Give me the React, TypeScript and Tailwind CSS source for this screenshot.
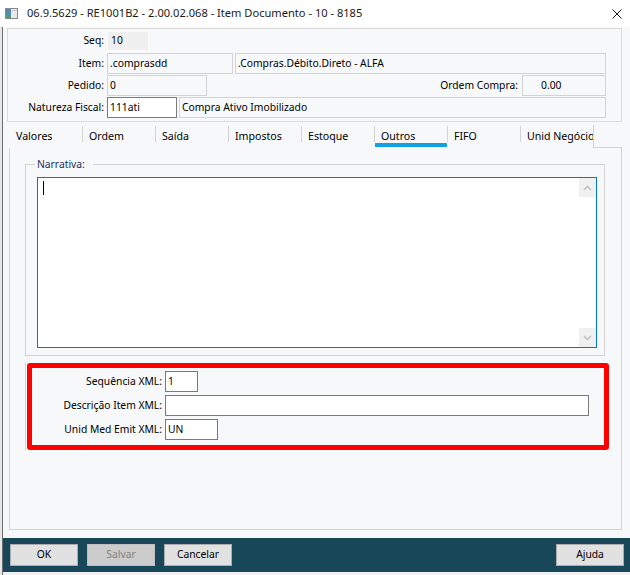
import React from "react";

const tabs = ["Valores", "Ordem", "Saída", "Impostos", "Estoque", "Outros", "FIFO", "Unid Negócio"];

function Box({ w, value, kind = "plain", pl = "pl-[2px]" }: { w: string; value?: string; kind?: "plain" | "edit" | "seq"; pl?: string }) {
  const styles = {
    plain: "border-[#d3d3d3] bg-[#f7f8fa]",
    edit: "border-[#7a7a7a] bg-white",
    seq: "border-[#fbfbfb] bg-[#f0f0f0]",
  };
  return (
    <div className={`${w} h-full border ${styles[kind]} ${pl} flex items-center whitespace-nowrap overflow-hidden`}>
      {value}
    </div>
  );
}

function WindowIcon() {
  return (
    <svg width="13" height="11" viewBox="0 0 13 11">
      <defs>
        <linearGradient id="wg" x1="0" y1="0" x2="0" y2="1">
          <stop offset="0" stopColor="#4f86c6" />
          <stop offset="1" stopColor="#4d9c7a" />
        </linearGradient>
      </defs>
      <rect x="0.5" y="0.5" width="12" height="10" fill="#e9e9e9" stroke="#8a8a8a" />
      <rect x="1" y="1" width="5" height="9" fill="url(#wg)" />
      <rect x="7" y="2" width="5" height="1" fill="#c8c8c8" />
    </svg>
  );
}

export default function App() {
  return (
    <div className="w-[630px] h-[575px] bg-[#e6e6e6] font-['Noto_Sans',sans-serif] text-[10.3px] text-black overflow-hidden flex flex-col">
      {/* TITLE BAR */}
      <div className="h-[27px] bg-white flex items-center pl-[5px] pr-[8px] shrink-0">
        <WindowIcon />
        <span className="ml-[9px] text-[11.1px] text-[#1a1a1a]">06.9.5629 - RE1001B2 - 2.00.02.068 - Item Documento - 10 - 8185</span>
        <div className="flex-1" />
        <svg width="10" height="10" viewBox="0 0 10 10">
          <path d="M0.5 0.5 L9.5 9.5 M9.5 0.5 L0.5 9.5" stroke="#1a1a1a" strokeWidth="1" />
        </svg>
      </div>

      {/* BODY */}
      <div className="flex-1 ml-[2px] border-l border-[#6e6e6e] bg-[#f7f8fa] flex flex-col">
        {/* HEADER PANEL */}
        <div className="ml-[4px] mt-[1px] w-[615px] h-[94px] border border-[#dadada] pt-[2px] pr-[15px] flex flex-col gap-[1px]">
          <div className="flex h-[20px] items-center">
            <div className="w-[96px] text-right">Seq:</div>
            <div className="ml-[3px] h-full flex"><Box w="w-[42px]" value="10" kind="seq" pl="pl-[3px]" /></div>
          </div>
          <div className="flex h-[21px] items-center mt-[1px]">
            <div className="w-[96px] text-right">Item:</div>
            <div className="ml-[3px] h-full flex gap-[2px]">
              <Box w="w-[126px]" value=".comprasdd" />
              <Box w="w-[371px]" value=".Compras.Débito.Direto - ALFA" />
            </div>
          </div>
          <div className="flex h-[21px] items-center">
            <div className="w-[96px] text-right">Pedido:</div>
            <div className="ml-[3px] h-full flex"><Box w="w-[100px]" value="0" /></div>
            <div className="flex-1 text-right">Ordem Compra:</div>
            <div className="ml-[4px] h-full flex"><Box w="w-[84px]" value="0.00" pl="pl-[18px]" /></div>
          </div>
          <div className="flex h-[21px] items-center">
            <div className="w-[96px] text-right">Natureza Fiscal:</div>
            <div className="ml-[3px] h-full flex gap-[2px]">
              <Box w="w-[70px]" value="111ati" kind="edit" />
              <Box w="w-[427px]" value="Compra Ativo Imobilizado" />
            </div>
          </div>
        </div>

        {/* TABS */}
        <div className="ml-[6px] mt-[3px] w-[613px] h-[23px] flex pl-[1px]">
          {tabs.map((t, i) => (
            <div
              key={t}
              className={`w-[73px] h-full flex overflow-hidden ${i === tabs.length - 1 ? "border-r border-[#d3d3d3]" : ""}`}
            >
              <div className="flex-1 flex flex-col min-w-0">
                <div className="pl-[6px] pt-[4px] whitespace-nowrap overflow-hidden text-[10.6px]">{t}</div>
                <div className={`mt-auto mb-[1px] h-[4px] ${i === 5 ? "bg-[#0ea2e0]" : ""}`} />
              </div>
              {i < tabs.length - 1 && <div className="w-[1px] h-[16px] mt-[1px] bg-[#d3d3d3]" />}
            </div>
          ))}
          <div className="flex-1 border-b border-[#d3d3d3]" />
        </div>

        {/* TAB PANEL */}
        <div className="ml-[6px] w-[613px] h-[382px] border-l border-r border-b border-[#d3d3d3] flex flex-col">
          <fieldset className="ml-[15px] mt-[9px] w-[580px] border border-[#d3d3d3] px-0 pb-[7px]">
            <legend className="ml-[9px] pl-[2px] pr-[8px] text-[#1d2f60] leading-[14px]">Narrativa:</legend>
            <div className="ml-[11px] mt-[6px] w-[560px] h-[171px] border border-[#0078d7] bg-white flex">
              <div className="flex-1 pl-[5px] pt-[3px]">
                <div className="w-[1px] h-[14px] bg-black" />
              </div>
              <div className="w-[17px] flex flex-col justify-between">
                <div className="h-[19px] bg-[#f0f0f0] flex items-center justify-center">
                  <svg width="9" height="6" viewBox="0 0 9 6"><path d="M1 5 L4.5 1.5 L8 5" stroke="#c2c2c2" strokeWidth="1.6" fill="none" /></svg>
                </div>
                <div className="h-[19px] bg-[#f0f0f0] flex items-center justify-center">
                  <svg width="9" height="6" viewBox="0 0 9 6"><path d="M1 1 L4.5 4.5 L8 1" stroke="#c2c2c2" strokeWidth="1.6" fill="none" /></svg>
                </div>
              </div>
            </div>
          </fieldset>

          {/* XML GROUP (highlighted) */}
          <div className="ml-[15px] mt-[7px] border-l border-[#d3d3d3] pl-[1px] flex">
            <div className="w-[582px] h-[87px] border-[5px] border-[#ff0000] rounded-[3px] pt-[3px] flex flex-col gap-[3px]">
              <div className="flex h-[21px] items-center">
                <div className="w-[130px] text-right">Sequência XML:</div>
                <div className="ml-[3px] h-full flex"><Box w="w-[33px]" value="1" kind="edit" /></div>
              </div>
              <div className="flex h-[21px] items-center">
                <div className="w-[130px] text-right">Descrição Item XML:</div>
                <div className="ml-[3px] h-full flex"><Box w="w-[424px]" kind="edit" /></div>
              </div>
              <div className="flex h-[21px] items-center">
                <div className="w-[130px] text-right">Unid Med Emit XML:</div>
                <div className="ml-[3px] h-full flex"><Box w="w-[53px]" value="UN" kind="edit" /></div>
              </div>
            </div>
          </div>
        </div>

        {/* FOOTER */}
        <div className="mt-[8px] h-[34px] bg-[#18475a] flex items-center pl-[7px] pr-[6px] gap-[9px]">
          <button className="w-[68px] h-[22px] bg-[#e1e1e1] border border-[#adadad] text-black">OK</button>
          <button className="w-[68px] h-[22px] bg-[#cccccc] border border-[#bfbfbf] text-[#838383]">Salvar</button>
          <button className="w-[68px] h-[22px] bg-[#e1e1e1] border border-[#adadad] text-black">Cancelar</button>
          <div className="flex-1" />
          <button className="w-[68px] h-[22px] bg-[#e1e1e1] border border-[#adadad] text-black">Ajuda</button>
        </div>
        <div className="flex-1 bg-[#f0f0f0]" />
      </div>
    </div>
  );
}
